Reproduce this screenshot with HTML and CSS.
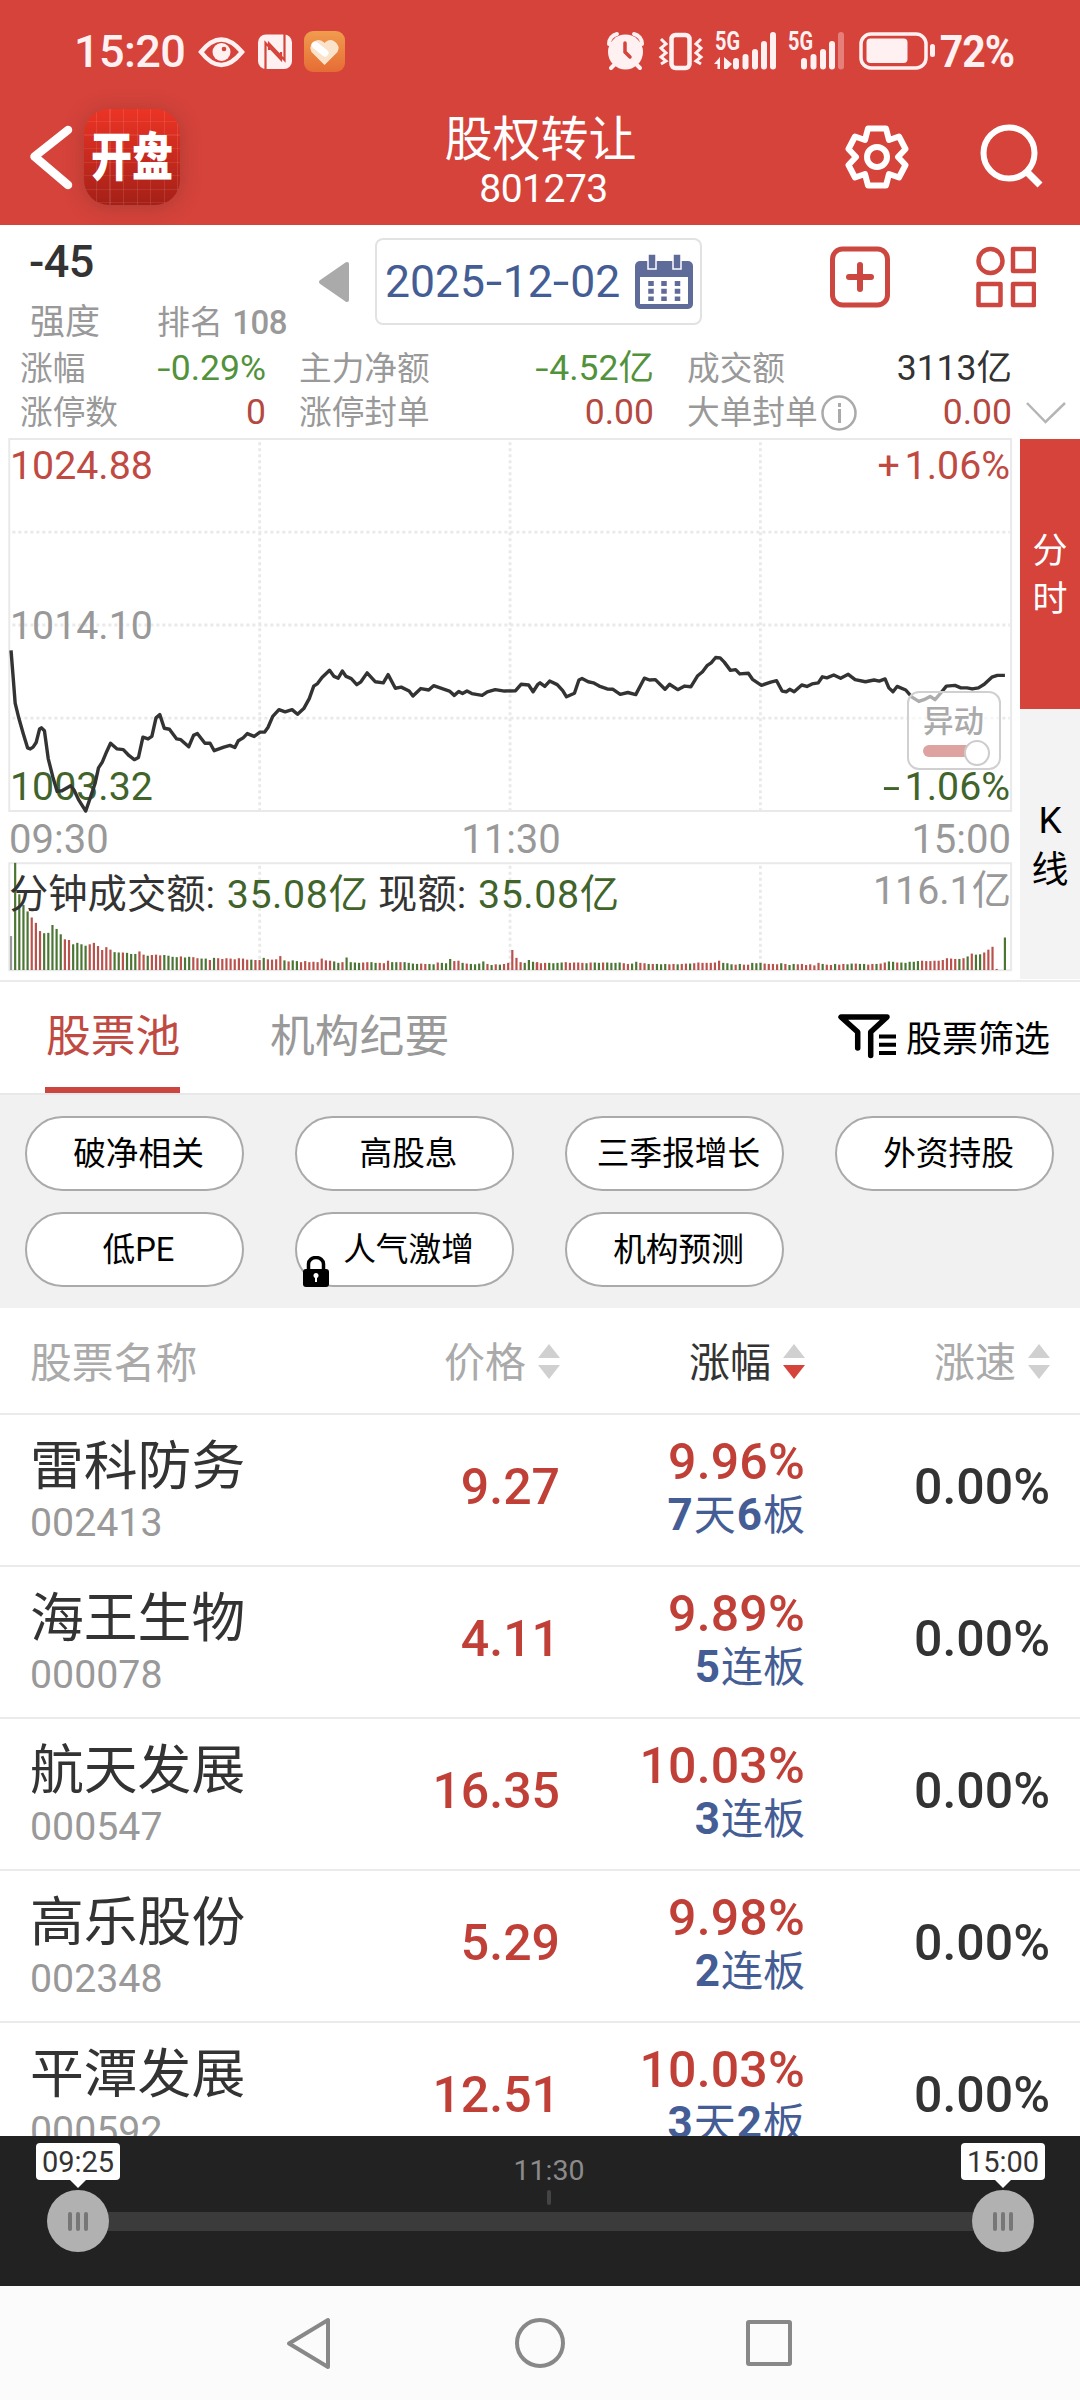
FILE: index.html
```html
<!DOCTYPE html>
<html lang="zh-CN">
<head>
<meta charset="utf-8">
<title>股权转让 801273</title>
<link rel="stylesheet" href="styles.css">
</head>
<body>
<div class="phone">
  <header class="header">
    <div class="status">
      <span class="clock">15:20</span>
      <svg class="st-left" width="148" height="44" viewBox="198 30 148 44">
        <path d="M201 52Q221 27 242 52Q221 78 201 52Z" fill="none" stroke="#fff1f1" stroke-width="4.5"/>
        <circle cx="221.500" cy="52" r="9" fill="#fff1f1"/><circle cx="224" cy="49" r="2.300" fill="#d5433b"/>
        <rect x="258" y="34.500" width="34" height="34.500" rx="8" fill="#fff1f1"/>
        <path d="M265.500 69V43L281 59.500V52M284.500 34V60L269 43.500V50" fill="none" stroke="#d5433b" stroke-width="2.200"/>
        <rect x="304" y="31" width="41" height="41" rx="9" fill="url(#orange)"/>
        <path d="M324.500 65l-13-13a8 8 0 0 1 12-10l1 1 1-1a8 8 0 0 1 12 10z" fill="#fbe3cb"/>
        <path d="M315 45l10 8" stroke="#fff" stroke-width="7" stroke-linecap="round"/>
        <defs><linearGradient id="orange" x2="0" y2="1"><stop stop-color="#f09c4d"/><stop offset="1" stop-color="#e66c35"/></linearGradient></defs>
      </svg>
      <svg class="st-right" width="330" height="44" viewBox="606 30 330 44" fill="#fff1f1">
        <circle cx="625.500" cy="52" r="17.500"/>
        <path d="M609 44a10 10 0 0 1 8-10M642 44a10 10 0 0 0-8-10M615 64l-4 4M636 64l4 4" fill="none" stroke="#fff1f1" stroke-width="4" stroke-linecap="round"/>
        <path d="M625 43v9l5 5" fill="none" stroke="#d5433b" stroke-width="3.500" stroke-linecap="round"/>
        <rect x="671.500" y="35" width="18" height="33" rx="4" fill="none" stroke="#fff1f1" stroke-width="4.500"/>
        <path d="M661 39l5 5-5 4 5 5-5 4 5 4-5 3M701 39l-5 5 5 4-5 5 5 4-5 4 5 3" fill="none" stroke="#fff1f1" stroke-width="3"/>
        <text class="net" x="715" y="50" textLength="25" lengthAdjust="spacingAndGlyphs">5G</text>
        <text class="net" x="788" y="50" textLength="25" lengthAdjust="spacingAndGlyphs">5G</text>
        <path d="M714 64l6-7v12h-2.500v-5zM724 57v12h3l5-5z"/>
        <path d="M736 61v5.500M745.500 57v9.500M755 52v14.500M764 44v22.500M773 35v31.500M804 61v5.500M813.500 57v9.500M823 52v14.500M832 44v22.500" stroke="#fff1f1" stroke-width="6" stroke-linecap="round"/>
        <path d="M841 35v31.500" stroke="#e67f79" stroke-width="6" stroke-linecap="round"/>
        <rect x="861" y="34" width="65" height="34" rx="10" fill="none" stroke="#fff1f1" stroke-width="3.500"/>
        <rect x="866.500" y="38.500" width="41" height="24.500" rx="4"/><rect x="930" y="44" width="5" height="13" rx="2.500"/>
      </svg>
      <span class="pct">72%</span>
    </div>
    <div class="titlebar">
      <svg class="back" width="46" height="72" viewBox="28 121 46 72"><path d="M68 130L34.500 156.500L68 185" fill="none" stroke="#fff" stroke-width="8.500" stroke-linecap="round" stroke-linejoin="round"/></svg>
      <div class="applogo"><span>开盘</span></div>
      <div class="title"><h1>股权转让</h1><span>801273</span></div>
      <svg class="gear" width="64" height="68" viewBox="-32 -34 64 68" fill="none" stroke="#fff" stroke-width="6" stroke-linejoin="round"><path d="M-9-28.500H9L12-17L22-20.500L28.500-8L21 0L28.500 8L22 20.500L12 17L9 28.500H-9L-12 17L-22 20.500L-28.500 8L-21 0L-28.500-8L-22-20.500L-12-17Z"/><circle r="10"/></svg>
      <svg class="search" width="66" height="68" viewBox="979 124 66 68" fill="none" stroke="#fff"><circle cx="1009" cy="154" r="25.500" stroke-width="6"/><path d="M1027 173l13 13" stroke-width="7"/></svg>
    </div>
  </header>

  <section class="summary">
    <div class="top">
      <div class="strength"><b>-45</b><div class="rank"><span class="q">强度</span><span>排名 <i>108</i></span></div></div>
      <svg class="prev" width="32" height="42" viewBox="0 0 32 42"><path d="M29 3v36L3 21z" fill="#aaa" stroke="#aaa" stroke-width="4" stroke-linejoin="round"/></svg>
      <div class="date"><span>2025<em>-</em>12<em>-</em>02</span>
        <svg width="58" height="56" viewBox="0 0 58 56"><path d="M5 7h48a5 5 0 0 1 5 5v38a5 5 0 0 1-5 5H5a5 5 0 0 1-5-5V12a5 5 0 0 1 5-5z" fill="#5f6b99"/><path d="M5 23h48v27H5z" fill="#fff"/><path d="M13 0h8v15h-8zM38 0h8v15h-8z" fill="#5f6b99" stroke="#fff" stroke-width="1.500"/><path d="M16 27v20M29 27v20M42.500 27v20" stroke="#5f6b99" stroke-width="5.500" stroke-dasharray="5 2.700"/></svg></div>
      <svg class="add" width="60" height="62" viewBox="0 0 60 62" fill="none" stroke="#cc473f" stroke-width="5"><rect x="2.500" y="3" width="55" height="56" rx="10"/><path d="M30 19v24M19 31h22" stroke-width="6" stroke-linecap="round"/></svg>
      <svg class="apps" width="60" height="62" viewBox="0 0 60 62" fill="none" stroke="#cc473f" stroke-width="4.500" stroke-linejoin="round"><circle cx="14.500" cy="15" r="12"/><path d="M37 3h21v22H37zM2.500 38h22v21h-22zM37 38h21v21H37z"/></svg>
    </div>
    <div class="stats">
      <div><span>涨幅</span><b class="g"><em>-</em>0.29%</b></div><div><span>主力净额</span><b class="g"><em>-</em>4.52亿</b></div><div><span>成交额</span><b>3113亿</b></div>
      <div><span>涨停数</span><b class="r">0</b></div><div><span>涨停封单</span><b class="r">0.00</b></div><div><span>大单封单<svg width="36" height="36" viewBox="0 0 36 36" fill="none" stroke="#aaa" stroke-width="2.500"><circle cx="18" cy="18" r="16.500"/><path d="M18.500 14v14M18.500 8v4" stroke-width="3"/></svg></span><b class="r">0.00</b></div>
      <svg class="more" width="40" height="24" viewBox="0 0 40 24"><path d="M1 2l18.500 19L39 2" fill="none" stroke="#b5b5b5" stroke-width="2.500"/></svg>
    </div>
  </section>

  <section class="chart">
    <div class="plot">
      <svg id="plot" width="1020" height="542" viewBox="0 22.4 2961.8 1517.6" preserveAspectRatio="none" fill="none">
        <g stroke="#e9e9e9" stroke-width="2" class="ns">
          <path d="M27 25H2936V1067H27zM27 1213H2936V1513H27z"/>
          <path stroke-width="2.800" stroke-dasharray="3 3" d="M36 286H2932M36 546H2932M36 807H2932M754 34V1064M1481 34V1064M2208 34V1064M754 1220V1510M1481 1220V1510M2208 1220V1510"/>
        </g>
        <g id="bars" class="ns"></g>
      </svg>
      <span class="lb red l" style="top:9px">1024.88</span><span class="lb red rt" style="top:9px"><em class="plus">+</em>1.06%</span>
      <span class="lb l" style="top:169px">1014.10</span>
      <span class="lb grn l" style="top:330px">1003.32</span><span class="lb grn rt" style="top:330px"><em class="minus">-</em>1.06%</span>
      <div class="times"><span>09:30</span><span>11:30</span><span>15:00</span></div>
      <div class="vol"><span>分钟成交额: <b>35.08亿</b> 现额: <b>35.08亿</b></span><span class="max">116.1亿</span></div>
      <svg class="line" width="1020" height="542" viewBox="0 22.4 2961.8 1517.6" preserveAspectRatio="none" fill="none"><polyline class="price" points="32,617 38,690 44,765 55,808 68,852 80,890 88,893 96,888 105,875 115,837 120,834 129,842 140,920 153,970 166,1012 180,1010 205,996 215,1008 228,1035 249,1067 262,1030 276,990 286,946 297,930 310,900 321,877 340,893 358,895 375,912 390,923 402,917 415,860 430,865 441,858 453,806 464,797 477,835 492,838 513,865 525,867 548,887 562,855 573,850 595,877 610,877 622,898 650,888 668,883 682,889 692,870 706,862 718,850 738,858 755,846 768,846 778,833 792,802 810,783 828,789 848,783 864,796 882,780 898,752 911,717 922,710 935,693 957,673 970,690 982,695 994,675 1005,690 1020,696 1036,713 1048,705 1066,680 1090,705 1113,708 1127,685 1148,723 1165,720 1188,731 1199,745 1222,724 1245,728 1259,716 1305,731 1319,743 1332,732 1343,738 1356,731 1370,738 1400,743 1415,733 1438,727 1465,731 1497,730 1513,712 1535,714 1548,733 1562,712 1568,708 1582,718 1596,703 1618,713 1634,730 1645,747 1668,737 1681,700 1690,696 1708,705 1723,708 1740,717 1763,725 1780,726 1801,740 1823,735 1846,741 1871,695 1886,700 1903,699 1931,726 1944,712 1968,727 1988,717 2006,719 2026,688 2040,677 2053,660 2065,652 2078,637 2091,638 2103,650 2121,673 2136,671 2148,683 2173,681 2185,698 2211,715 2238,706 2255,702 2271,731 2283,733 2293,726 2306,733 2328,714 2343,718 2358,711 2376,708 2388,691 2401,694 2421,686 2441,695 2463,684 2483,699 2513,705 2538,700 2553,703 2570,697 2581,722 2593,733 2605,718 2630,728 2648,748 2668,760 2683,755 2701,746 2715,755 2733,735 2748,717 2773,715 2790,722 2808,722 2823,725 2841,722 2858,712 2880,692 2896,687 2918,687"/></svg>
      <div class="toggle"><span>异动</span><i></i></div>
    </div>
    <nav class="side"><div class="on"><span>分</span><span>时</span></div><div><span>K</span><span>线</span></div></nav>
  </section>

  <nav class="tabs">
    <a class="on">股票池</a><a>机构纪要</a>
    <span class="filter"><svg width="60" height="46" viewBox="0 0 60 46" fill="none" stroke="#000" stroke-width="5.500" stroke-linejoin="round" stroke-linecap="round"><path d="M19.700 34V18L3 3H49L32.700 18V41.500"/><path stroke-linecap="butt" stroke-width="4" d="M41 22.500h17M41 30.700h17M41 39h17"/></svg>股票筛选</span>
  </nav>
  <div class="chips">
    <span>破净相关</span><span>高股息</span><span>三季报增长</span><span>外资持股</span><span>低PE</span>
    <span class="locked">人气激增<svg width="26" height="31" viewBox="0 0 26 31"><path d="M5.500 14V8a7.500 6.500 0 0 1 15 0v6" fill="none" stroke="#000" stroke-width="3.500"/><rect y="13" width="26" height="18" rx="3"/><circle cx="13" cy="19.500" r="2.500" fill="#fff"/><path d="M13 20v6" stroke="#fff" stroke-width="2"/></svg></span>
    <span>机构预测</span>
  </div>

  <main class="list">
    <div class="row head">
      <span class="name">股票名称</span>
      <span>价格<i class="sort"></i></span><span class="act">涨幅<i class="sort down"></i></span><span>涨速<i class="sort"></i></span>
    </div>
    <div class="row"><div class="name"><b>雷科防务</b><small>002413</small></div><div class="up">9.27</div><div class="chg"><b>9.96%</b><small><i>7</i>天<i>6</i>板</small></div><div>0.00%</div></div>
    <div class="row"><div class="name"><b>海王生物</b><small>000078</small></div><div class="up">4.11</div><div class="chg"><b>9.89%</b><small><i>5</i>连板</small></div><div>0.00%</div></div>
    <div class="row"><div class="name"><b>航天发展</b><small>000547</small></div><div class="up">16.35</div><div class="chg"><b>10.03%</b><small><i>3</i>连板</small></div><div>0.00%</div></div>
    <div class="row"><div class="name"><b>高乐股份</b><small>002348</small></div><div class="up">5.29</div><div class="chg"><b>9.98%</b><small><i>2</i>连板</small></div><div>0.00%</div></div>
    <div class="row"><div class="name"><b>平潭发展</b><small>000592</small></div><div class="up">12.51</div><div class="chg"><b>10.03%</b><small><i>3</i>天<i>2</i>板</small></div><div>0.00%</div></div>
  </main>

  <footer class="slider">
    <div class="handle"><span>09:25</span><i><u></u><u></u><u></u></i></div>
    <div class="track"><span>11:30</span><i></i><b></b></div>
    <div class="handle"><span>15:00</span><i><u></u><u></u><u></u></i></div>
  </footer>
  <div class="sysnav">
    <svg width="506" height="56" viewBox="286 2315 506 56" fill="none" stroke="#888" stroke-width="4" stroke-linejoin="round"><path d="M328 2320v47L289 2343.500z"/><circle cx="540" cy="2343" r="23"/><rect x="748" y="2322" width="42" height="42" rx="1"/></svg>
  </div>
</div>
<script src="chart.js"></script>
</body>
</html>
```
FILE: styles.css
```css
*{box-sizing:border-box}
body{margin:0;background:#fff}
.phone{width:1080px;height:2400px;display:flex;flex-direction:column;overflow:hidden;background:#fff;color:#333;font-family:Roboto,"Noto Sans CJK SC",sans-serif;line-height:1;white-space:nowrap}
.phone>*{flex:none}
svg{display:block;flex:none}
b,h1,small,i,em,u{font-weight:inherit;font-style:normal;text-decoration:none;margin:0}
em{display:inline-block;transform:scaleX(1.35);margin:0 .06em}
.plus{transform:none;margin:0 .12em 0 0}
.minus{transform:scaleX(1.6);margin:0 .2em 0 0}

.header{height:225px;background:#d5433b;color:#fff}
.status{height:103px;padding:0 60px 0 74px;display:flex;align-items:center;color:#fff1f1;font-size:45px;font-weight:500}
.clock{width:124px;letter-spacing:-.6px}
.st-right{margin-left:auto;overflow:visible}
.pct{width:84px;padding-left:4px;font-weight:700;letter-spacing:-1px;transform:scaleX(.91);transform-origin:0 50%}
.net{font-family:Roboto,sans-serif;font-size:25px;font-weight:700}
.titlebar{height:122px;padding:0 35px 14px 28px;display:flex;align-items:center}
.applogo{width:96px;height:96px;margin-left:10px;border-radius:25px;display:flex;align-items:center;justify-content:center;box-shadow:0 2px 20px rgba(110,50,40,.4);background:repeating-linear-gradient(90deg,transparent 0 12px,rgba(255,255,255,.1) 12px 13.5px),repeating-linear-gradient(transparent 0 12px,rgba(255,255,255,.08) 12px 13.5px),linear-gradient(#ec3425,#a42017)}
.applogo span{font-size:41px;font-weight:900;transform:scaleY(1.28) translateY(1px)}
.title{flex:1;display:flex;flex-direction:column;align-items:center;padding-left:49px;margin-right:-7px}
.title h1{font-size:48px;margin-top:10px}
.title span{font-size:39px;margin:6px 0 0 6px;letter-spacing:-.5px}
.search{margin-left:70px}

.summary{height:213px}
.top{height:120px;display:flex;align-items:flex-start}
.strength{width:318px;padding:14px 0 0 29px}
.strength b{display:block;font-size:45px;font-weight:500;height:66px;letter-spacing:-.5px}
.rank{display:flex;align-items:baseline;color:#999;font-size:33px}
.rank .q{width:128px;font-size:35px;padding-left:1px}
.rank i{font-weight:500;margin-left:1px;letter-spacing:-.5px}
.prev{margin-top:36px}
.date{width:327px;height:87px;margin:13px 0 0 25px;border:2px solid #e2e2e2;border-radius:8px;display:flex;align-items:center;justify-content:space-between;padding:2px 7px 0 8px;color:#455d95;font-size:44.5px}
.date svg{margin-top:-2px}
.add{margin:21px 0 0 128px}
.apps{margin:21px 0 0 86px}
.stats{position:relative;display:grid;grid-template-columns:246px 355px 325px;column-gap:33px;grid-auto-rows:44px;padding:2px 0 0 20px;font-size:35.5px}
.stats div{display:flex;justify-content:space-between;align-items:center}
.stats span{display:flex;align-items:center;gap:3px;font-size:32.7px;color:#999}
.g{color:#52923b}.r{color:#b5483f}
.more{position:absolute;right:14px;top:56px}

.chart{display:flex;height:542px}
.plot{position:relative;width:1020px}
.plot>svg{position:absolute;left:0;top:0}
.ns *,.price{vector-effect:non-scaling-stroke}
.price{stroke:#333;stroke-width:3.4;stroke-linejoin:round}
.lb{position:absolute;font-size:39.3px;color:#999}
.l{left:10px}.rt{right:10px}
.red{color:#c04a42}.grn,.vol b{color:#41642b}
.times{position:absolute;left:9px;right:9px;top:382px;display:flex;justify-content:space-between;color:#999;font-size:40px}
.times span:nth-child(2){margin-left:2px}
.vol{position:absolute;left:9px;right:9px;top:438px;display:flex;justify-content:space-between;font-size:39.3px}
.vol b{letter-spacing:.6px;margin-left:2px}
.vol .max{color:#999;margin-top:-4px}
.toggle{position:absolute;left:907px;top:253px;width:94px;height:79px;border:2px solid #d0d0d0;border-radius:12px;background:rgba(255,255,255,.6);padding:14px 14px 0;color:#aaa;font-size:30.5px;font-weight:500}
.toggle i{display:block;position:relative;width:50px;height:12px;margin-top:7px;border-radius:6px;background:#dea3a0}
.toggle i::after{content:"";position:absolute;left:41px;top:-5px;width:22px;height:22px;border:2px solid #ccc;border-radius:50%;background:#fff}
.side{width:60px;font-size:35px}
.side div{height:270px;background:#f3f3f3;color:#000;display:flex;flex-direction:column;align-items:center;justify-content:center;gap:13px;padding-top:3px}
.side .on{height:270px;margin-top:1px;background:#d5433b;color:#fff}
.side div:last-child{gap:13px;font-size:37px}

.tabs{height:115px;padding:0 30px 0 45px;border-top:2px solid #ebebeb;border-bottom:2px solid #e8e8e8;display:flex;color:#999;font-size:44.8px}
.tabs a{padding-top:33px;width:180px;margin-left:48px}
.tabs .on{color:#c04a42;width:135px;margin:0 42px 0 0;padding-left:1px;border-bottom:6px solid #cb463f}
.filter{margin-left:auto;display:flex;align-items:center;gap:8px;font-size:36px;color:#000;padding-top:4px}
.filter svg{margin-top:-6px}
.chips{height:213px;background:#f1f1f1;padding:21px 26px 0 25px;display:grid;grid-template-columns:repeat(4,219px);grid-auto-rows:75px;gap:21px 51px;font-size:32.7px;color:#000}
.chips span{position:relative;border:2px solid #aaa;border-radius:38px;background:#fff;display:flex;align-items:center;justify-content:center;padding:2px 0 0 8px}
.chips svg{position:absolute;left:6px;bottom:-2px}

.list{height:828px;overflow:hidden}
.row{height:152px;border-bottom:2px solid #ebebeb;padding:0 30px;display:grid;grid-template-columns:301px 229px 245px 245px;align-items:center;justify-items:end;font-size:50px;font-weight:500}
.row>.up,.row>div:last-child{padding-bottom:6px}
.name{justify-self:start}
.row b,.row small{display:block}
.name b{font-size:53.8px;font-weight:400;margin-top:3px}
.name small{font-size:39.3px;font-weight:400;color:#999;margin-top:10px}
.up,.chg b{color:#c04038}
.chg{text-align:right}
.chg b{margin-top:-6px;letter-spacing:.2px}
.chg small{font-size:42px;color:#455d95;font-weight:400;margin-top:6px}
.chg small i{font-size:44px;font-weight:700;margin:0 1px}
.head{height:107px;font-size:41px;font-weight:400;color:#aaa;padding-top:6px}
.head .name{font-size:41.8px;padding-top:1px}
.head>span{display:flex;align-items:center}
.act{color:#333}
.sort{width:23px;margin-left:11px;display:flex;flex-direction:column;align-items:center;gap:7px;margin-top:-5px}
.sort::before,.sort::after{content:"";border:11px solid transparent;border-top:0;border-bottom:14px solid #d0d0d0}
.sort::after{border-bottom:0;border-top:14px solid #d0d0d0}
.sort.down::after{border-top-color:#d5433b}

.slider{height:150px;background:#222;display:flex;padding:7px 33px 0 34px}
.handle{width:88px;display:flex;flex-direction:column;align-items:center;position:relative;z-index:1}
.handle span{width:84px;height:37px;border-radius:4px;background:#fff;color:#333;font-size:29px;display:flex;align-items:center;justify-content:center;padding-top:2px}
.handle::before{content:"";order:1;border:8px solid transparent;border-bottom:0;border-top-color:#fff}
.handle i{order:2;width:62px;height:62px;margin-top:2px;border-radius:50%;background:#b1b1b1;display:flex;align-items:center;justify-content:center;gap:4px}
.handle u{width:4px;height:19px;border-radius:2px;background:#777}
.track{flex:1;display:flex;flex-direction:column;align-items:center;color:#8b8b8b;font-size:28.5px;padding:14px 0 0 17px;margin:0 -20px}
.track i{width:4px;height:15px;margin-top:4px;border-radius:2px;background:#444}
.track b{width:calc(100% + 17px);height:19px;margin:7px 0 0 -17px;background:#3b3b3b}
.sysnav{height:114px;background:#fbfbfb;padding-right:2px;display:flex;justify-content:center;align-items:center}
```
FILE: chart.js
```js
// One bar per trading minute: colour (g = down, r = up, n = flat) and height.
var head = 'n95 g300 g212 g182 g164 r147 r132 r109 g103 g104 g126 g115 g100 r86 r84 g72 g76 g72 g68 r72 r76 r67 r56 r64 r57 g50 g49 r49 g48 g45 g45 r52 r43 g40 r42 r43 r41 g42 g40 g37 g36 r38 g35 g37 r36 r33 g32 g32 r28 g34 r33 r31 r33 r32 r30 r33 r32 r29 g29 r28 r28 g34 r30 r29 r30 r39 g27 r24 g27 g25 r22 r25 r22 r23 r22 r32 r27 r26 g24 g20 r22 g35 g22 g21 g20 r21 r22 g22 g20 r20 r19 r26 g22 g22 r22 g22 g20 g18 g17 r18 r17 g17 g16 r21 g20 g19 g31 r25 r26 g20 r18 g17 g16 g18 g24 r17 g14 r16 g15 r17 r20 r56 r34 r22 g20 g28 g23 r22 '.trim().split(' ');
var tail = 'r20 r19 r20 g20 g19 g20 g21 r22 r20 r21 r21 r20 g19 r21 g21 g20 r21 g21 g20 g20 g21 r19 r17 g18 g23 r20 r19 g17 r17 g17 g16 g17 r16 r17 g16 r17 r18 g18 r19 r21 r20 r20 r20 r21 r26 g20 g19 g16 r15 g17 r15 r15 g20 g19 g20 r18 r17 r17 r16 g19 r17 g14 g17 r16 r17 r14 r16 r13 r20 g17 r15 r14 g17 r15 r17 g16 g18 r18 g17 g17 r15 r17 g17 r18 r21 g24 g23 r21 g21 g20 g23 g23 g25 r26 r25 r25 r26 r26 r28 r33 r32 r31 g31 r33 g38 r46 g43 g44 r49 r57 r65 r3'.split(' ');
var colours = { g: '#4c7533', r: '#b9524d', n: '#999' };
var bars = document.getElementById('bars');

function bar(x, item) {
  var line = document.createElementNS('http://www.w3.org/2000/svg', 'line');
  line.setAttribute('x1', x);
  line.setAttribute('x2', x);
  line.setAttribute('y1', 1512);
  line.setAttribute('y2', 1512 - item.slice(1));
  line.setAttribute('stroke', colours[item[0]]);
  line.setAttribute('stroke-width', 2.2);
  bars.appendChild(line);
}

head.forEach(function (item, i) { bar(32 + 12.03 * i, item); });
tail.forEach(function (item, i) { bar(2882 + 12.03 * (i - tail.length + 2), item); });
bar(2918, 'g91');
```
